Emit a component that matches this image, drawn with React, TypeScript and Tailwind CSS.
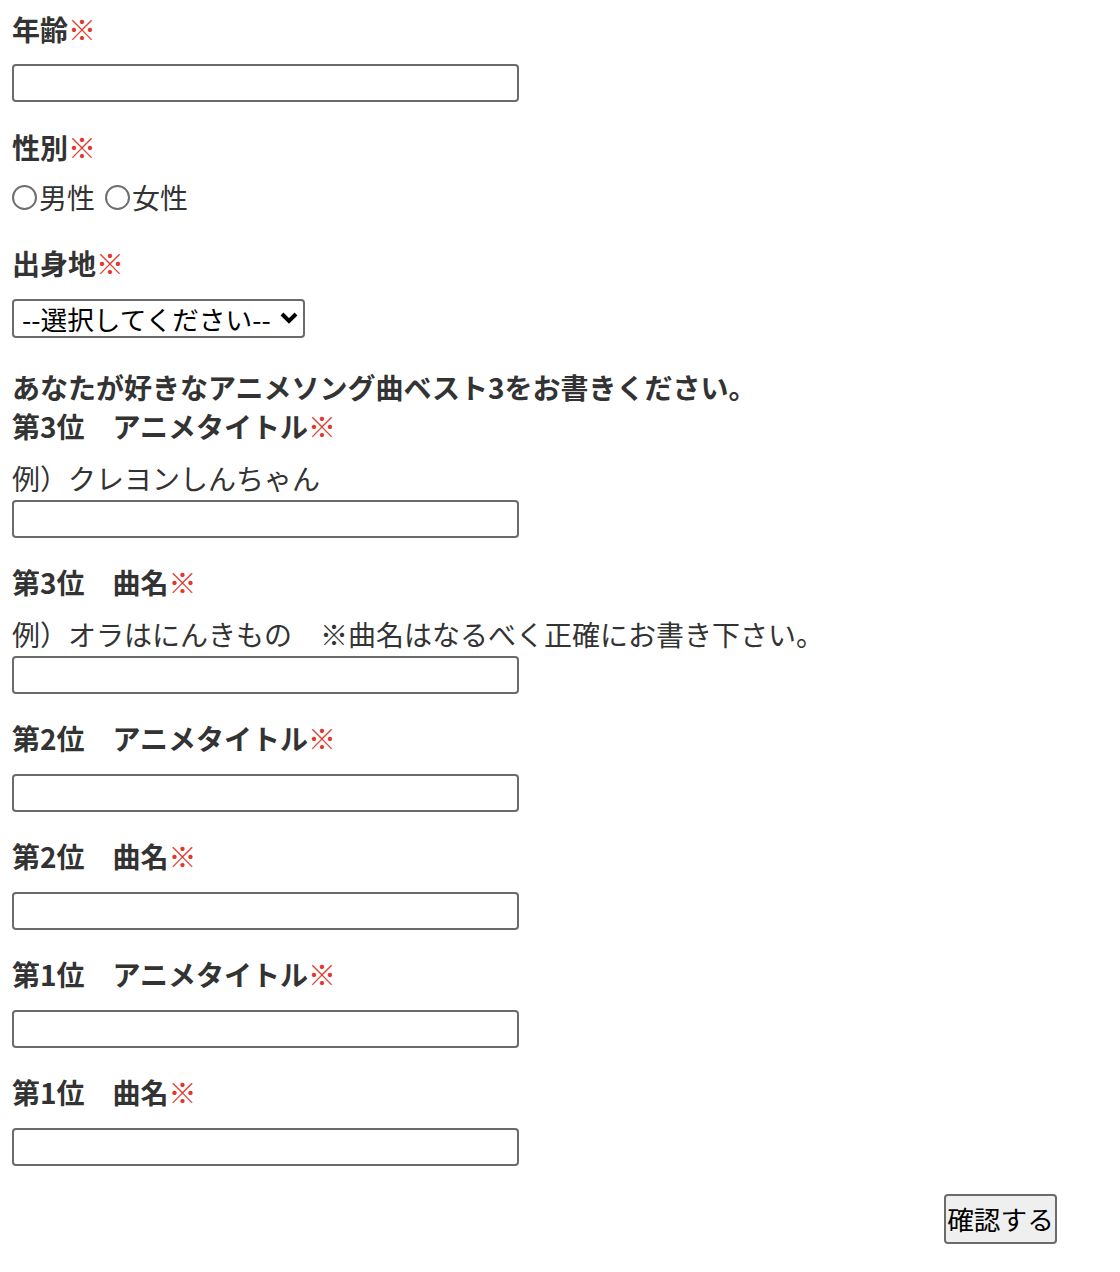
import { useState } from "react";

const Req = () => <span className="text-[#e0382c] font-normal">※</span>;

const boxCls = "block w-[507px] h-[38px] border-2 border-[#6b6b6b] rounded-[4px] bg-white px-2 outline-none";

const Field = ({ label, note, first }: { label: string; note?: string; first?: boolean }) => {
    return (
        <div className={first ? "mt-0" : "mt-[25px]"}>
            <p className="font-bold leading-[39px]">
                {label}
                <Req />
            </p>
            {note && <p className="mt-[13px] leading-[39px]">{note}</p>}
            <input type="text" className={(note ? "mt-[2px] " : "mt-[16px] ") + boxCls} />
        </div>
    );
};

const App = () => {
    const [sex, setSex] = useState("");
    return (
        <div
            className="w-[1120px] min-h-[1272px] bg-white text-[#333] text-[28px] pl-[12px] pt-[10px]"
            style={{ fontFamily: '"Noto Sans CJK JP", "Noto Sans", sans-serif' }}
        >
            <form onSubmit={(e) => { e.preventDefault() }}>
                <div>
                    <p className="font-bold leading-[39px]">年齢<Req /></p>
                    <input type="text" className={"mt-[15px] " + boxCls} />
                </div>

                <div className="mt-[26px]">
                    <p className="font-bold leading-[39px]">性別<Req /></p>
                    <div className="mt-[11px] flex items-center leading-[39px]">
                        {["男性", "女性"].map((s, i) => (
                            <label key={s} className={"flex items-center cursor-pointer " + (i > 0 ? "ml-[10px]" : "")} onClick={() => setSex(s)}>
                                <span className="w-[25px] h-[25px] rounded-full border-2 border-[#6e6e6e] bg-white flex items-center justify-center">
                                    {sex === s && <span className="w-[13px] h-[13px] rounded-full bg-[#0075ff]" />}
                                </span>
                                <span className="ml-[2px]">{s}</span>
                            </label>
                        ))}
                    </div>
                </div>

                <div className="mt-[27px]">
                    <p className="font-bold leading-[39px]">出身地<Req /></p>
                    <div className="relative mt-[16px] w-[293px] h-[39px]">
                        <select className="appearance-none block w-full h-[39px] border-2 border-[#6b6b6b] rounded-[4px] bg-white text-black text-[26.67px] leading-[32px] pl-[8px] pr-0 outline-none">
                            <option>--選択してください--</option>
                        </select>
                        <svg className="absolute right-[7px] top-[12px] pointer-events-none" width="18" height="14" viewBox="0 0 18 14">
                            <path d="M2 3 L9 10 L16 3" fill="none" stroke="#000" strokeWidth="4" strokeLinejoin="miter" />
                        </svg>
                    </div>
                </div>

                <div className="mt-[30px]">
                    <p className="font-bold leading-[39px]">あなたが好きなアニメソング曲ベスト3をお書きください。</p>
                    <Field first label="第3位　アニメタイトル" note="例）クレヨンしんちゃん" />
                    <Field label="第3位　曲名" note="例）オラはにんきもの　※曲名はなるべく正確にお書き下さい。" />
                    <Field label="第2位　アニメタイトル" />
                    <Field label="第2位　曲名" />
                    <Field label="第1位　アニメタイトル" />
                    <Field label="第1位　曲名" />
                </div>

                <div className="flex justify-end w-[1045px] mt-[28px]">
                    <button
                        type="submit"
                        className="w-[113px] h-[50px] px-0 whitespace-nowrap border-2 border-[#6b6b6b] rounded-[4px] bg-[#efefef] text-black text-[26.67px] leading-none cursor-pointer"
                    >
                        確認する
                    </button>
                </div>
            </form>
        </div>
    );
};

export default App;
